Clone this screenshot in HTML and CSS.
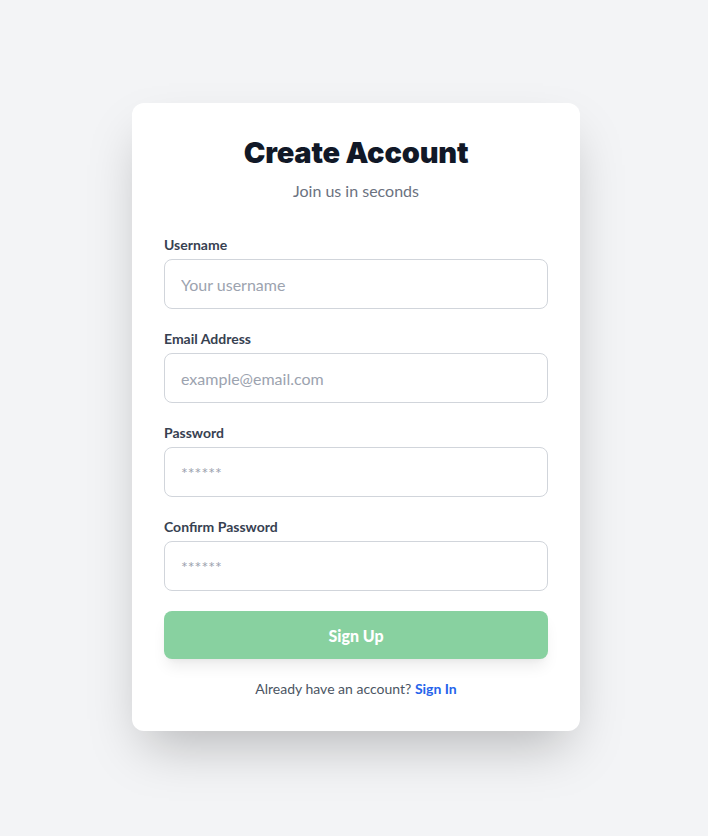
FILE: index.html
```html
<!DOCTYPE html>
<html lang="en">
<head>
<meta charset="utf-8">
<title>Create Account</title>
<link rel="stylesheet" href="styles.css">
</head>
<body>
<main class="page">
  <form class="card">
    <h1 class="title">Create Account</h1>
    <p class="subtitle">Join us in seconds</p>
    <div class="fields">
      <div class="field">
        <label class="label" for="u">Username</label>
        <input class="input" id="u" type="text" placeholder="Your username">
      </div>
      <div class="field">
        <label class="label" for="e">Email Address</label>
        <input class="input" id="e" type="email" placeholder="example@email.com">
      </div>
      <div class="field">
        <label class="label" for="p">Password</label>
        <input class="input" id="p" type="password" placeholder="******">
      </div>
      <div class="field">
        <label class="label" for="c">Confirm Password</label>
        <input class="input" id="c" type="password" placeholder="******">
      </div>
    </div>
    <button class="button" type="button">Sign Up</button>
    <p class="footer">Already have an account? <a class="link" href="#">Sign In</a></p>
  </form>
</main>
</body>
</html>
```
FILE: styles.css
```css
* { box-sizing: border-box; }
html, body { margin: 0; padding: 0; }
body {
  background: #f3f4f6;
  font-family: "Lato", "Open Sans", sans-serif;
  color: #111827;
}
.page {
  min-height: 100vh;
  display: flex;
  align-items: center;
  justify-content: center;
  padding-left: 4px;
  padding-bottom: 2px;
}
.card {
  width: 448px;
  background: #ffffff;
  border-radius: 12px;
  padding: 32px;
  box-shadow: 0 25px 50px -12px rgba(0, 0, 0, 0.25);
  display: flex;
  flex-direction: column;
}
.title {
  margin: 0;
  text-align: center;
  font-family: "Inter", "Lato", sans-serif;
  font-size: 29px;
  line-height: 36px;
  font-weight: 900;
  letter-spacing: -0.2px;
  color: #111827;
}
.subtitle {
  margin: 8px 0 0;
  text-align: center;
  font-size: 16px;
  line-height: 24px;
  color: #6b7280;
}
.fields {
  margin-top: 32px;
  display: flex;
  flex-direction: column;
  gap: 20px;
}
.field {
  display: flex;
  flex-direction: column;
  gap: 4px;
}
.label {
  font-size: 14px;
  line-height: 20px;
  font-weight: 700;
  color: #374151;
}
.input {
  height: 50px;
  border: 1px solid #d1d5db;
  border-radius: 8px;
  padding: 0 16px;
  font-family: inherit;
  font-size: 16px;
  color: #111827;
  background: #fff;
  outline: none;
}
.input::placeholder { color: #9ca3af; }
.button {
  margin-top: 20px;
  height: 48px;
  border: none;
  border-radius: 8px;
  background: #88d1a0;
  color: #ffffff;
  font-family: inherit;
  font-size: 16px;
  font-weight: 900;
  box-shadow: 0 10px 15px -3px rgba(0, 0, 0, 0.08), 0 4px 6px -4px rgba(0, 0, 0, 0.06);
}
.footer {
  margin: 20px 0 0;
  text-align: center;
  font-size: 14px;
  line-height: 20px;
  color: #4b5563;
}
.link {
  color: #2563eb;
  font-weight: 700;
  text-decoration: none;
}
```
